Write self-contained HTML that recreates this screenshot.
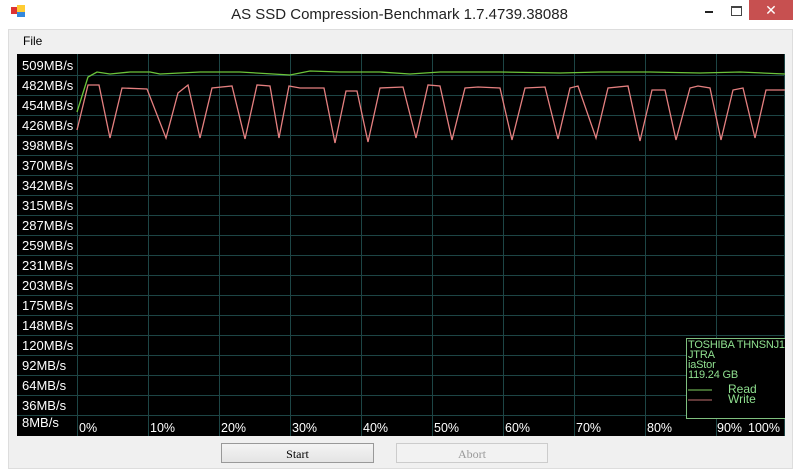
<!DOCTYPE html><html><head><style>
body{margin:0;width:799px;height:474px;background:#fff;font-family:"Liberation Sans",sans-serif;position:relative;overflow:hidden}
.t{position:absolute;left:0;top:0;width:799px;text-align:center;font-size:15px;color:#222;top:6px}
.client{position:absolute;left:8px;top:29px;width:783px;height:438px;background:#f0f0f0;border:1px solid #ddd}
.chart{position:absolute;left:17px;top:54px;width:768px;height:382px;background:#000;overflow:hidden}
.yl{position:absolute;left:5px;color:#fff;font-size:13px}
.xl{position:absolute;top:367px;color:#fff;font-size:12.5px}
.btn{position:absolute;top:443px;height:20px;font-family:"Liberation Serif",serif;font-size:12px;text-align:center;line-height:20px;box-sizing:border-box}
</style></head><body>
<div style="position:absolute;left:11px;top:7px;width:7px;height:7px;background:#d33"></div>
<div style="position:absolute;left:17px;top:5px;width:8px;height:8px;background:#fc3"></div>
<div style="position:absolute;left:17px;top:12px;width:8px;height:5px;background:#38d"></div>
<div class="t">AS SSD Compression-Benchmark 1.7.4739.38088</div>
<div style="position:absolute;left:705px;top:11px;width:8px;height:2px;background:#222"></div>
<div style="position:absolute;left:731px;top:6px;width:9px;height:7px;border:1px solid #444;border-top-width:2px"></div>
<div style="position:absolute;left:749px;top:0;width:44px;height:20px;background:#c75050;color:#fff;text-align:center;font-size:14px;line-height:20px">✕</div>
<div class="client"></div>
<div style="position:absolute;left:23px;top:34px;font-size:12px;color:#000">File</div>
<div class="chart">
<svg width="768" height="382" style="position:absolute;left:0;top:0">
<g stroke="#1d4545" stroke-width="1">
<line x1="60.5" y1="0" x2="60.5" y2="382"/><line x1="131.5" y1="0" x2="131.5" y2="382"/><line x1="202.5" y1="0" x2="202.5" y2="382"/><line x1="273.5" y1="0" x2="273.5" y2="382"/><line x1="344.5" y1="0" x2="344.5" y2="382"/><line x1="415.5" y1="0" x2="415.5" y2="382"/><line x1="486.5" y1="0" x2="486.5" y2="382"/><line x1="557.5" y1="0" x2="557.5" y2="382"/><line x1="628.5" y1="0" x2="628.5" y2="382"/><line x1="699.5" y1="0" x2="699.5" y2="382"/><line x1="767.5" y1="0" x2="767.5" y2="382"/>
<line x1="0" y1="21.5" x2="768" y2="21.5"/><line x1="0" y1="41.5" x2="768" y2="41.5"/><line x1="0" y1="61.5" x2="768" y2="61.5"/><line x1="0" y1="81.5" x2="768" y2="81.5"/><line x1="0" y1="101.5" x2="768" y2="101.5"/><line x1="0" y1="121.5" x2="768" y2="121.5"/><line x1="0" y1="141.5" x2="768" y2="141.5"/><line x1="0" y1="161.5" x2="768" y2="161.5"/><line x1="0" y1="181.5" x2="768" y2="181.5"/><line x1="0" y1="201.5" x2="768" y2="201.5"/><line x1="0" y1="221.5" x2="768" y2="221.5"/><line x1="0" y1="241.5" x2="768" y2="241.5"/><line x1="0" y1="261.5" x2="768" y2="261.5"/><line x1="0" y1="281.5" x2="768" y2="281.5"/><line x1="0" y1="301.5" x2="768" y2="301.5"/><line x1="0" y1="321.5" x2="768" y2="321.5"/><line x1="0" y1="341.5" x2="768" y2="341.5"/><line x1="0" y1="361.5" x2="768" y2="361.5"/>
</g>
<g transform="translate(-17,-54)" fill="none" stroke-width="1.3">
<polyline stroke="#e58080" points="77,130 88,85 99,85 110,138 122,88 147,89 166,138 178,93 188,85 200,138 212,88 232,86 245,139 257,85 270,86 279,138 289,86 300,88 324,88 335,143 346,91 357,91 368,142 380,88 403,87 416,138 428,85 440,86 452,140 465,88 478,87 500,88 512,140 525,88 545,87 558,139 570,88 578,86 596,138 608,88 628,86 640,141 652,90 665,90 676,140 690,88 698,86 710,88 721,140 733,90 743,88 755,138 766,90 785,90"/>
<polyline stroke="#6cc43a" points="77,112 88,77 97,72 110,74 130,72 150,72 160,74 200,72 240,72 290,75 310,71 340,72 380,72 410,74 440,72 500,72 560,73 600,72 650,72 700,73 740,72 785,74"/>
</g>
<rect x="669.5" y="284.5" width="110" height="80" fill="#000" stroke="#7fbf7f"/>
<line x1="671" y1="336" x2="695" y2="336" stroke="#7fd060"/>
<line x1="671" y1="346" x2="695" y2="346" stroke="#c07070"/>
</svg>
<div style="position:absolute;left:671px;top:286px;color:#8fe08f;font-size:11px;line-height:10px;white-space:nowrap;letter-spacing:-0.2px">TOSHIBA THNSNJ1<br>JTRA<br>iaStor<br>119.24 GB</div>
<div style="position:absolute;left:711px;top:330px;color:#8fe08f;font-size:12px;line-height:10px;white-space:nowrap">Read<br>Write</div>
<div class="yl" style="top:4px">509MB/s</div><div class="yl" style="top:24px">482MB/s</div><div class="yl" style="top:44px">454MB/s</div><div class="yl" style="top:64px">426MB/s</div><div class="yl" style="top:84px">398MB/s</div><div class="yl" style="top:104px">370MB/s</div><div class="yl" style="top:124px">342MB/s</div><div class="yl" style="top:144px">315MB/s</div><div class="yl" style="top:164px">287MB/s</div><div class="yl" style="top:184px">259MB/s</div><div class="yl" style="top:204px">231MB/s</div><div class="yl" style="top:224px">203MB/s</div><div class="yl" style="top:244px">175MB/s</div><div class="yl" style="top:264px">148MB/s</div><div class="yl" style="top:284px">120MB/s</div><div class="yl" style="top:304px">92MB/s</div><div class="yl" style="top:324px">64MB/s</div><div class="yl" style="top:344px">36MB/s</div><div class="yl" style="top:361px">8MB/s</div>
<div class="xl" style="left:62px">0%</div><div class="xl" style="left:133px">10%</div><div class="xl" style="left:204px">20%</div><div class="xl" style="left:275px">30%</div><div class="xl" style="left:346px">40%</div><div class="xl" style="left:417px">50%</div><div class="xl" style="left:488px">60%</div><div class="xl" style="left:559px">70%</div><div class="xl" style="left:630px">80%</div><div class="xl" style="left:700px">90%</div><div class="xl" style="left:731px">100%</div>
</div>
<div class="btn" style="left:221px;width:153px;border:1px solid #999;background:linear-gradient(#f4f4f4,#e4e4e4);color:#000">Start</div>
<div class="btn" style="left:396px;width:152px;border:1px solid #ccc;background:#f2f2f2;color:#999">Abort</div>
</body></html>
